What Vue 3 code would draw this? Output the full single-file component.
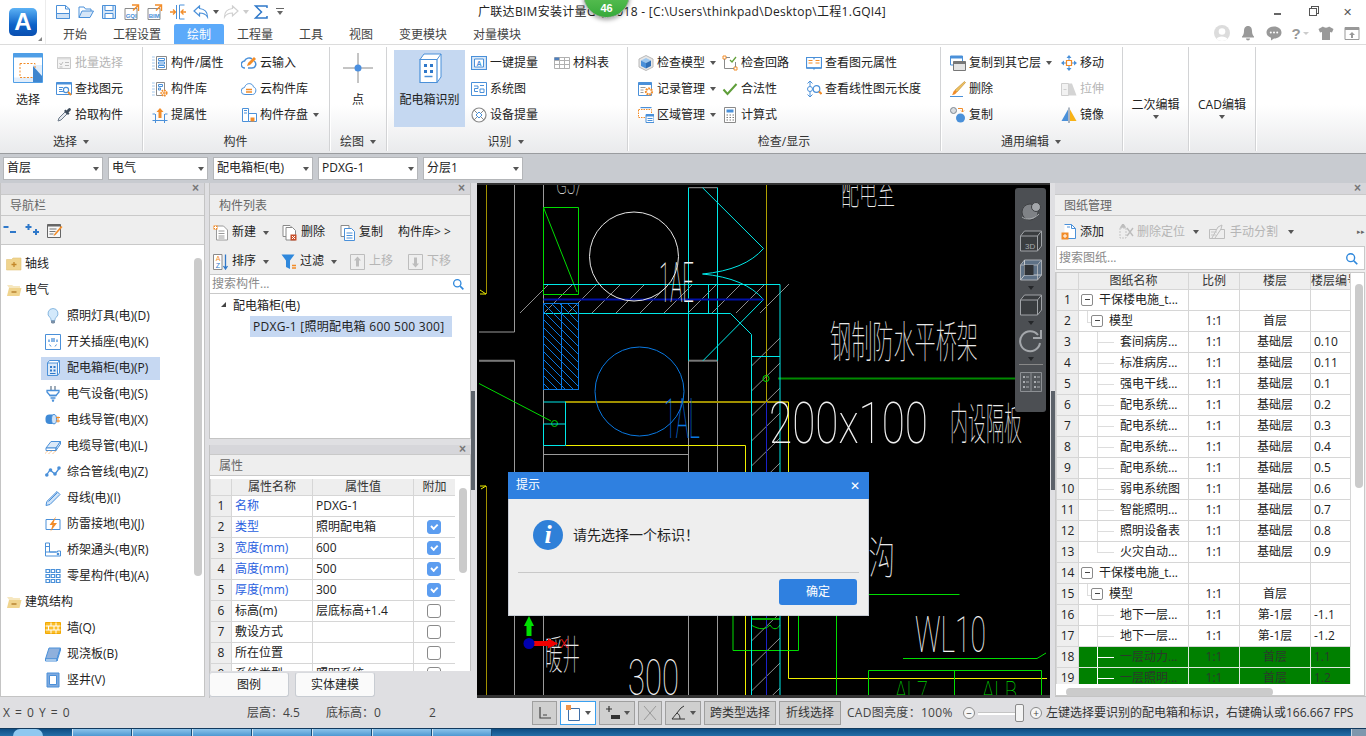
<script setup>
import { h } from "vue";

const B = "#4a90d9";
const O = "#f28c28";
const G = "#8a8a8a";
const icons = {
  qaNew: `<path d="M1.5 1.5h9l4 3.5v9.5h-13z" fill="#fff" stroke="${B}"/><path d="M10.5 1.5V5h4" fill="none" stroke="${B}"/><path d="M1.5 9.5h13v5h-13z" fill="#cfe2f6" stroke="${B}"/>`,
  qaOpen: `<path d="M1 13.5V3h5l1.5 2H13v2" fill="#fff" stroke="${B}"/><path d="M1 13.5L4 7h11.5l-3.5 6.5z" fill="#d6e6f7" stroke="${B}"/>`,
  qaSave: `<path d="M1.5 1.5h13v13h-13z" fill="#d6e6f7" stroke="${B}"/><path d="M4 1.5h8v5H4z" fill="#fff" stroke="${B}"/><path d="M4 9.5h8v5H4z" fill="#fff" stroke="${B}"/>`,
  qaGqi: `<path d="M1 4.5h12v11H1z" fill="#fff" stroke="${G}"/><path d="M8 1h6.5v6" fill="none" stroke="${O}" stroke-width="1.4"/><path d="M14 1.5L9 6.5" stroke="${O}" stroke-width="1.4"/><text x="1.7" y="13.5" font-size="6" font-weight="700" font-family="Liberation Sans" fill="${B}">GQI</text>`,
  qaBim: `<path d="M1 4.5h12v11H1z" fill="#fff" stroke="${G}"/><path d="M8 1h6.5v6" fill="none" stroke="${O}" stroke-width="1.4"/><path d="M14 1.5L9 6.5" stroke="${O}" stroke-width="1.4"/><text x="1.7" y="13.5" font-size="6" font-weight="700" font-family="Liberation Sans" fill="${B}">BIM</text>`,
  qaSplit: `<path d="M6.5 1v14M9.5 1v14M9.5 1h5M9.5 15h5" fill="none" stroke="${B}"/><path d="M0 8h5M3 5.5L5.5 8 3 10.5M16 8h-4M13.5 5.5L11 8l2.5 2.5" fill="none" stroke="${O}" stroke-width="1.3"/>`,
  undo: `<path d="M6.5 2L1 7l5.5 5V9c3 0 6 .7 8 4 0-5-3-8-8-8.5z" fill="#fff" stroke="${B}" stroke-width="1.2"/>`,
  redo: `<path d="M9.5 2L15 7l-5.5 5V9c-3 0-6 .7-8 4 0-5 3-8 8-8.5z" fill="#fff" stroke="#d0d0d0" stroke-width="1.2"/>`,
  sigma: `<path d="M14 4V2H2.5l6 6-6 6H14v-2" fill="none" stroke="#2f78c9" stroke-width="1.5"/>`,
  batch: `<path d="M1.5 2.5h13v11h-13z" fill="#f4f4f4" stroke="#c8c8c8"/><path d="M1.5 2.5h13v2h-13z" fill="#dcdcdc"/><path d="M3.5 8l1.5 2 2-3M3.5 12h3M9 7.5h4M9 10.5h4" fill="none" stroke="#bdbdbd"/>`,
  find: `<path d="M.5 1.5h15v12H.5z" fill="#fff" stroke="${B}"/><path d="M.5 1.5h15v2H.5z" fill="${B}"/><path d="M3 6.5h4M3 8.5h3M3 10.5h4" stroke="${B}"/><circle cx="10" cy="9" r="2.6" fill="#fff" stroke="${B}" stroke-width="1.2"/><path d="M12 11l3 3" stroke="${O}" stroke-width="2"/>`,
  pick: `<path d="M2 14l1-3 6-6 2 2-6 6z" fill="#e4e8ee" stroke="#6e7b8a"/><path d="M8 4l4 4 1.5-1.5-1-1 2-2a1.4 1.4 0 0 0-2-2l-2 2-1-1z" fill="#3e4c5c"/>`,
  attr: `<path d="M.5 2h2M.5 5h2M.5 8h2M.5 11h2M.5 14h2" stroke="${B}" stroke-dasharray="1 .6"/><path d="M4.5 1.5h10v13h-10z" fill="#fff" stroke="${G}"/><path d="M6.5 3.5h6v2h-6zM6.5 7h6v2h-6zM6.5 10.5h6v2h-6z" fill="#fff" stroke="${B}"/>`,
  lib: `<path d="M.5 2h2M.5 5h2M.5 8h2M.5 11h2M.5 14h2" stroke="${B}" stroke-dasharray="1 .6"/><path d="M4.5 1.5h8v13h-8z" fill="#fff" stroke="${G}"/><path d="M6.5 3.5h4v2h-4zM6.5 7h2v2h-2z" fill="#fff" stroke="${B}"/><circle cx="12" cy="12" r="2.6" fill="#fff" stroke="${O}" stroke-width="2" stroke-dasharray="1.6 .8"/><circle cx="12" cy="12" r="1" fill="${O}"/>`,
  extract: `<path d="M8 1L4.5 5h2v6h3V5h2z" fill="${O}"/><path d="M.5 7H3M.5 13.5h15M13 7h2.5M3.5 7v9M12.5 7v9" fill="none" stroke="${B}"/>`,
  cloudIn: `<path d="M4 13a3.5 3.5 0 0 1-.5-7C4.5 3 9 2 11 4" fill="none" stroke="${B}" stroke-width="1.5"/><path d="M13 6c3 2 2 7-2 7H7" fill="none" stroke="${B}" stroke-width="1.5"/><path d="M6 11l1-3 6-6 2 2-6 6z" fill="${O}"/>`,
  cloudLib: `<path d="M4 13.5a3.5 3.5 0 0 1-.5-7C4.5 3 8 1.5 11 3.5c1 .7 1.2 1.6 1.5 2.5 3.5.5 3 7.500-1 7.500z" fill="#fff" stroke="${B}"/><path d="M5 8.500h6M5 11h6" stroke="${O}" stroke-width="1.5"/>`,
  saveComp: `<path d="M1.5 1.5h6v13h-6z" fill="#fff" stroke="${B}"/><path d="M3 3.500h3M3 6h3" stroke="${B}"/><path d="M7.500 6.500h8v8h-8z" fill="#fff" stroke="${B}"/><path d="M9.500 10.500h4v4h-4z" fill="${O}"/>`,
  selectBig: `<path d="M.5 .5h29v29H.5z" fill="#fff" stroke="#4f9ee6"/><path d="M.5 .5h29v4H.5z" fill="#4f9ee6"/><path d="M1 24.500h19V12h9v17H1z" fill="#e2eefb"/><path d="M7 10.500h15v14H7z" fill="none" stroke="${O}" stroke-dasharray="2 1.5"/><path d="M20 13l9 10v6h-9z" fill="#3f86cf"/>`,
  point: `<path d="M15 0v12M15 18v12M0 15h12M18 15h12" stroke="${G}"/><circle cx="15" cy="15" r="3.5" fill="#4a8fe0"/>`,
  boxBig: `<path d="M5 6.500L9 1h17v23l-4 5.500M22 6.500L26 1" fill="#fff" stroke="${B}"/><path d="M5 6.500h17v23H5z" fill="#fff" stroke="${B}" stroke-width="1.2"/><path d="M9 11h3v3H9zM15 11h3v3h-3zM9 17h3v3H9zM15 17h3v3h-3z" fill="#2f78c9"/><path d="M9.500 23.500h8" stroke="${B}" stroke-width="1.5"/>`,
  onekey: `<path d="M.5 1.500h15v13H.5z" fill="#dbe9f8" stroke="${B}" stroke-width="1.2"/><path d="M3.500 4h9v8h-9z" fill="#fff" stroke="${B}"/><text x="5.500" y="10.500" font-size="7" font-weight="700" font-family="Liberation Sans" fill="${B}">A</text>`,
  sys: `<path d="M.5 1.500h15v13H.5z" fill="#fff" stroke="${B}"/><path d="M3 5h4v2.500H3.500v3H7M9 4.500h4M9 8h4v3.500H9z" fill="none" stroke="${B}"/>`,
  device: `<circle cx="8" cy="8" r="7" fill="#fff" stroke="${G}" stroke-width="1.2"/><path d="M3 3l10 10M13 3L3 13" stroke="${G}"/><path d="M8 5l3 3-3 3-3-3z" fill="#fff" stroke="${B}"/>`,
  material: `<path d="M.5 2.500h15v11H.5z" fill="#fff" stroke="#b0b0b0"/><path d="M.5 2.500h5v3h-5z" fill="#4e7fbd"/><path d="M.5 5.500h15M.5 9.500h15M5.500 2.500v11M10.500 2.500v11" stroke="#b0b0b0"/>`,
  cube: `<path d="M8 .5l7 3.500v8l-7 3.500-7-3.500V4z" fill="#e6e6e6" stroke="#b8b8b8"/><path d="M8 3l5 2.500L8 8 3 5.500z" fill="#9cc7ef"/><path d="M3 5.500v5.500L8 13.500V8z" fill="#4a90d9"/><path d="M13 5.500v5.500L8 13.500V8z" fill="#2f6fb6"/>`,
  record: `<path d="M.5 1.500h13v13H.5z" fill="#fff" stroke="${B}"/><path d="M.5 1.500h13v2.500H.5z" fill="${B}"/><path d="M2.500 6.500h5M2.500 9h3M2.500 11.500h3" stroke="#9a9a9a"/><circle cx="11" cy="10.500" r="3" fill="#fff" stroke="${O}" stroke-width="2.2" stroke-dasharray="1.8 .8"/>`,
  region: `<path d="M.5 2.500h13v8H.5z" fill="#fff" stroke="${O}" stroke-dasharray="1.5 1"/><path d="M8 7.500h8v8H8z" fill="#fff" stroke="${B}"/><path d="M8 7.500h8v2H8z" fill="${B}"/><path d="M9.500 11.500h5M9.500 13.500h5" stroke="${B}"/><path d="M2.500 .5h11" stroke="${B}" stroke-width="1.4"/>`,
  loop: `<path d="M1 1h3v3H1zM12 12h3v3h-3z" fill="#fff" stroke="${O}"/><path d="M4 2.500h4M2.500 4v9.500H12M13.500 7v5" fill="none" stroke="${G}"/><path d="M8 5l2 2 4-5" fill="none" stroke="#62a03a" stroke-width="1.3"/>`,
  legal: `<path d="M1.500 8.500l4 4.500 9-10" fill="none" stroke="#5f9e3a" stroke-width="2"/>`,
  calc: `<path d="M2.500 .5h11v15h-11z" fill="#fff" stroke="#8a8a8a"/><path d="M4.500 2.500h7v3h-7z" fill="${B}"/><path d="M4.500 8h1.500M7.500 8H9M10.500 8H12M4.500 10.500h1.500M7.500 10.500H9M10.500 10.500H12M4.500 13h1.500M7.500 13H9M10.500 13H12" stroke="#777"/>`,
  book: `<path d="M.5 2.500h7l.5 1 .5-1h7V13H8.500l-.5 1-.5-1H.5z" fill="#fff" stroke="${B}" stroke-width="1.2"/><path d="M2.500 5.500h4M2.500 8h4M9.500 5.500h4M9.500 8h4" stroke="${O}"/><path d="M.5 13h15" stroke="${B}" stroke-width="1.5"/>`,
  len: `<path d="M4 0v16M1.500 2.500L4 0l2.500 2.500M1.500 13.500L4 16l2.500-2.500" fill="none" stroke="${B}"/><circle cx="4" cy="8" r="2.5" fill="#fff" stroke="${B}"/><circle cx="10.500" cy="8" r="3.3" fill="#fff" stroke="${B}" stroke-width="1.2"/><path d="M13 10.500l2.500 2.500" stroke="${O}" stroke-width="2"/>`,
  copyLayer: `<path d="M.5 1h12v9H.5z" fill="#fff" stroke="${B}"/><path d="M.5 1h12v2.500H.5z" fill="${B}"/><path d="M3.500 6.500h12v9h-12z" fill="#e4e4e4" stroke="#777"/><path d="M3.500 6.500h12v2.500h-12z" fill="#777"/>`,
  move: `<path d="M8 0L5.500 3h5zM8 16l-2.500-3h5zM0 8l3-2.500v5zM16 8l-3-2.500v5z" fill="${B}"/><path d="M3 8h2M11 8h2M8 3v2M8 11v2" stroke="${B}"/><path d="M5.500 5.500h5v5h-5z" fill="#fff" stroke="${O}" stroke-width="1.2"/>`,
  brush: `<path d="M14.500 .5l1 1L7 11l-2-2z" fill="#f0c060" stroke="#b98a30" stroke-width=".6"/><path d="M5 9l2 2c-1 2-3 3-5 3 1-1 1-4 3-5z" fill="${O}"/><path d="M0 15.500h13" stroke="${B}"/>`,
  stretch: `<path d="M.5 2.500h7v12h-7z" fill="#f2f2f2" stroke="#cfcfcf"/><path d="M7.500 2.500h3.500l4.500 12h-8z" fill="#d4d4d4"/><path d="M2.500 8.500h3" stroke="#cfcfcf"/>`,
  copy: `<circle cx="3.500" cy="3.500" r="3" fill="#d9dce0" stroke="#7d8790"/><circle cx="10.500" cy="11" r="4.500" fill="#4a90d9"/><path d="M8 1.500h4.500V5M11 3.500l1.500 1.500L14 3.500" fill="none" stroke="${O}"/>`,
  mirror: `<path d="M7 2.500v11.500H.5z" fill="#4a90d9"/><path d="M9 2.500v11.500h6.500z" fill="#f7b217"/><path d="M8 .5v15.500" stroke="#5a6e85"/>`,
  folderPlus: `<path d="M.5 3.500h5l1.500-1.500h8V14H.5z" fill="#f0d48e" stroke="#e3c478" stroke-width=".6"/><path d="M8 6v5M5.500 8.500h5" stroke="#c2872a" stroke-width="1.3"/>`,
  folderMinus: `<path d="M1 3h5l1.500 1H14v2.500H3.500z" fill="#f6e7bf"/><path d="M3 6h12.500L13.500 14H1z" fill="#f0d48e"/><path d="M5.500 10h5" stroke="#b88432" stroke-width="1.5"/>`,
  bulb: `<path d="M8 .5a5 5 0 0 0-3 9c1 1 1 2 1 3h4c0-1 0-2 1-3a5 5 0 0 0-3-9z" fill="#d3e9fb" stroke="#89b8e0"/><path d="M6 12.500h4v2l-1 1H7l-1-1z" fill="#7a8fa6"/>`,
  socket: `<path d="M.5 .5h15v15H.5z" fill="#fff" stroke="${B}"/><path d="M4 5.500v2.500M7 4v4M9 4v4M12 5.500v2.500" stroke="${B}" stroke-width="1.3"/><path d="M4.500 10.500l1.500 2M11.500 10.500L10 12.500" stroke="${B}"/>`,
  cabinet: `<path d="M2.500 3L4.500 .5h10v12.500l-2 2.500M12.500 3l2-2.500" fill="#fff" stroke="${B}"/><path d="M2.500 3h10v12.500h-10z" fill="#dbe9f8" stroke="${B}"/><path d="M5 6h2v2H5zM8.500 6h2v2h-2zM5 9.500h2v2H5zM8.500 9.500h2v2h-2z" fill="#2f78c9"/><path d="M5 13.500h5.500" stroke="#2f78c9"/>`,
  plug: `<path d="M6 0v4M10 0v4" stroke="#6b7e92" stroke-width="1.3"/><path d="M2 4.500h12v1.500l-3 3.500H5L2 6z" fill="#fff" stroke="${B}" stroke-width="1.3"/><path d="M4.500 9.500h7M5.500 12h5" stroke="${B}" stroke-width="1.6"/><path d="M6.500 13.500h3l-1 2.500h-1z" fill="${B}"/>`,
  wire: `<rect x=".5" y="2.500" width="11" height="9.500" rx="4" fill="#3f8ad6"/><ellipse cx="9" cy="7.200" rx="2.500" ry="4.700" fill="#cfe3f8" stroke="${B}"/><path d="M11 5.500h4M11 9h4M13 4.500v6" stroke="${O}"/>`,
  cable: `<path d="M1 10L6 3.500h9.500L11 10z" fill="#dbe9f8" stroke="${B}"/><path d="M1 10h10v2.500H1zM11 10l4.500-6.500V6L11 12.500z" fill="#fff" stroke="${B}"/><path d="M0 15.500L3 12.500M4 15.500L7 12.500M8 15.500L11 12.500" stroke="${O}" stroke-dasharray="1 .8"/>`,
  net: `<path d="M1.500 11L5 6l5 4 4.500-6" fill="none" stroke="${B}" stroke-width="1.3"/><circle cx="1.800" cy="11" r="1.8" fill="${B}"/><circle cx="5.500" cy="6" r="1.8" fill="${B}"/><circle cx="10" cy="10" r="1.8" fill="${B}"/><circle cx="14" cy="4" r="1.8" fill="${B}"/>`,
  bus: `<path d="M1 15.500l.8-4L12 1.500l3 3L5 14.500z" fill="#cfe3f8" stroke="${B}"/><path d="M3.500 11.500l9-9" stroke="${B}"/>`,
  lightning: `<path d="M1 3.500h14v10H1z" fill="#fff" stroke="${B}"/><path d="M11 .5L4.500 9h3L5.500 15.500 12 7H8.500z" fill="${O}"/>`,
  bridge: `<path d="M.5 1h4v9h8v-1h3v5h-15z" fill="#fff" stroke="${B}"/><path d="M.5 10h11M1 4.500h3" stroke="${B}"/><circle cx="13" cy="12" r="1.3" fill="${B}"/>`,
  grid: `<path d="M1 1.500h3.500v3H1zM6.200 1.500h3.500v3H6.200zM11.500 1.500H15v3h-3.500zM1 6.500h3.500v3H1zM6.200 6.500h3.500v3H6.200zM11.500 6.500H15v3h-3.500zM1 11.500h3.500v3H1zM6.200 11.500h3.500v3H6.200zM11.500 11.500H15v3h-3.500z" fill="none" stroke="${B}" stroke-width="1.2"/>`,
  wall: `<path d="M.5 2.500h15v11H.5z" fill="#fbbd28" stroke="#f2a900"/><path d="M.5 6h15M.5 10h15M6 2.500V6M11 2.500V6M3.500 6v4M9 6v4M13 6v4M6 10v3.500M11 10v3.500" stroke="#fff"/>`,
  slab: `<path d="M.5 13l3.500-11h11.500L12 13z" fill="#8fb0dc" stroke="${B}"/><path d="M.5 13H12v2H.5zM12 13l3.500-11v2L12 15z" fill="#fff" stroke="${B}"/>`,
  shaft: `<path d="M2 1h12v14H2z" fill="#7fa9de" stroke="${B}"/><path d="M4.500 3.500h7v9h-7z" fill="#fff" stroke="${B}"/>`,
  collapse: `<path d="M.5 4h5M7 9h6" stroke="#2f78c9" stroke-width="2"/>`,
  expand: `<path d="M.5 4h6M3.500 1v6M8 9h6M11 6v6" stroke="#2f78c9" stroke-width="2"/>`,
  edit: `<path d="M.5 1.500h13v13H.5z" fill="#f8f8f8" stroke="#666"/><path d="M.5 1.500h13v2H.5z" fill="#666"/><path d="M2.500 6h7M2.500 8.500h6M2.500 11h4" stroke="#777"/><path d="M15.500 4l-7 8-2 1 .8-2 6.700-8z" fill="${O}"/>`,
  addDoc: `<path d="M3.500 1h7l4 4v10h-11z" fill="#fff" stroke="#9a9a9a"/><path d="M5.500 6h6M5.500 8.500h6M5.500 11h6M5.500 13h6" stroke="#9a9a9a"/><path d="M.5 .5h4v4h-4z" fill="${O}"/><path d="M2.500 1v3M1 2.500h3" stroke="#fff"/>`,
  delDoc: `<path d="M1 .5h7l1 1v10H1z" fill="#fff" stroke="#8a8a8a"/><path d="M4 2.500h6.500l3 3v9.500H4z" fill="#fff" stroke="#8a8a8a"/><path d="M8.500 9.500h6v6h-6z" fill="#c8502c"/><path d="M10 11l3 3M13 11l-3 3" stroke="#fff"/>`,
  copyDoc: `<path d="M1 .5h8v11H1z" fill="#fff" stroke="#8a8a8a"/><path d="M4.500 3.500h7l3 3v9h-10z" fill="#fff" stroke="${B}"/><path d="M6.500 8h6M6.500 10.500h6M6.500 13h6" stroke="${B}"/>`,
  sort: `<path d="M.5 .5h8.500v15H.5z" fill="#fff" stroke="#8a8a8a"/><text x="2.700" y="7" font-size="7" font-family="Liberation Sans" fill="${O}">A</text><text x="2.700" y="14" font-size="7" font-family="Liberation Sans" fill="#2f78c9">Z</text><path d="M12.500 .5v14M10.500 12l2 3 2-3" fill="none" stroke="#2f78c9" stroke-width="1.3"/>`,
  filter: `<path d="M.5 .5h13L9 6.500V15l-4-2V6.500z" fill="#2f88dc"/><path d="M11 11.500h4M11 14h4" stroke="${O}" stroke-width="1.3"/>`,
  up: `<path d="M.5 .5h14v15H.5z" fill="#eee" stroke="#bdbdbd"/><path d="M7.500 2.500L4 6.500h2v6h3v-6h2z" fill="#bdbdbd"/>`,
  down: `<path d="M.5 .5h14v15H.5z" fill="#eee" stroke="#bdbdbd"/><path d="M7.500 13.500L4 9.500h2v-6h3v6h2z" fill="#bdbdbd"/>`,
  search: `<circle cx="6.500" cy="6.500" r="4.500" fill="none" stroke="#2f88dc" stroke-width="1.6"/><path d="M10 10l4 4" stroke="#2f88dc" stroke-width="2"/>`,
  add: `<path d="M3.500 .5h7l4 4v10h-11" fill="#fff" stroke="${B}"/><path d="M10.500 .5v4h4M6 3h3" fill="none" stroke="${B}"/><path d="M.5 8.500h7v7h-7z" fill="${O}"/><path d="M4 10v4M2 12h4" stroke="#fff"/>`,
  delLoc: `<path d="M2 4h6v10H2z" fill="none" stroke="#c4c4c4" stroke-dasharray="2 1"/><path d="M5 0L3 3h4zM9 4l6 8M15 4l-6 8" stroke="#bdbdbd" stroke-width="1.4" fill="#bdbdbd"/>`,
  handSplit: `<path d="M.5 5.500h15v9H.5z" fill="none" stroke="#bdbdbd"/><path d="M3 14l6-11 4-2-1 4-6 9" fill="#efefef" stroke="#bdbdbd"/><path d="M2 8h6M2 11h5" stroke="#c8c8c8"/>`,
  avatar: `<circle cx="8" cy="8" r="8" fill="#dcdcdc"/><circle cx="8" cy="6.500" r="3.3" fill="#fff"/><path d="M2.500 14c1-3.500 9.500-3.500 11 0-3 2.500-8 2.500-11 0z" fill="#fff"/>`,
  bell: `<path d="M8 1C5 1 4 3.500 4 6c0 3-1 4.500-2 5.500v1h12v-1c-1-1-2-2.500-2-5.500 0-2.500-1-5-4-5z" fill="#999"/><path d="M6 13.500h4a2 2 0 0 1-4 0z" fill="#999"/>`,
  chat: `<path d="M8 1.500c4.200 0 7.500 2.500 7.500 6S12.200 13.500 8 13.500l-3 2v-2.800C2.300 11.800.5 9.900.5 7.500c0-3.500 3.300-6 7.500-6z" fill="#999"/><circle cx="4.800" cy="7.500" r="1" fill="#fff"/><circle cx="8" cy="7.500" r="1" fill="#fff"/><circle cx="11.200" cy="7.500" r="1" fill="#fff"/>`,
  shirt: `<path d="M5 1.500L.5 4l1.500 3.500L4 7v8h8V7l2 .5L15.500 4 11 1.500C10.500 3 5.500 3 5 1.500z" fill="#999"/>`,
  upload: `<path d="M1 2.500h14v12H1z" fill="#fff" stroke="#999"/><path d="M1 2.500h14v2.500H1z" fill="#999"/><path d="M8 7l-3 3h2v3h2v-3h2z" fill="#999"/>`,
  sphere: `<circle cx="11" cy="12" r="8" fill="#7f8286" stroke="#3f4144"/><circle cx="17" cy="7" r="4.500" fill="#a4a7ab" stroke="#3f4144"/><path d="M3 17c4 3 11 3 17-3" fill="none" stroke="#a8abae"/>`,
  box3d: `<path d="M1.500 7h17v15h-17zM1.500 7l4-5h17v15l-4 5M18.500 7l4-5" fill="#3a3d40" stroke="#a0a3a7"/><text x="6" y="20" font-size="8" font-family="Liberation Sans" fill="#a8abaf">3D</text>`,
  boxWire: `<path d="M1.500 7h17v15h-17zM1.500 7l4-5h17v15l-4 5M18.500 7l4-5" fill="#5e7186" stroke="#a8adb3"/><path d="M5.500 2v15h17M5.500 17l-4 5" fill="none" stroke="#c4c8cc"/><path d="M5.500 7h9v10h-9z" fill="#2f3236"/>`,
  boxSolid: `<path d="M1.500 7h17v15h-17zM1.500 7l4-5h17v15l-4 5M18.500 7l4-5" fill="#3a3d40" stroke="#a0a3a7"/>`,
  refresh: `<path d="M19 6a10 10 0 1 0 2 8" fill="none" stroke="#a4a7ab" stroke-width="2"/><path d="M22 1v8h-8" fill="none" stroke="#a4a7ab" stroke-width="2"/>`,
  list: `<path d="M1.500 1.500h21v19h-21z" fill="#53575b" stroke="#8d9094"/><path d="M12 1.500v19" stroke="#8d9094"/><path d="M4 5h2v2H4zM4 10h2v2H4zM4 15h2v2H4zM15 5h2v2h-2zM15 10h2v2h-2zM15 15h2v2h-2z" fill="#a9acb0"/><path d="M7 6h3M7 11h3M7 16h3M18 6h3M18 11h3M18 16h3" stroke="#a9acb0"/>`,
  corner: `<path d="M3 2v11h11" fill="none" stroke="#444" stroke-width="1.2"/><path d="M6 10h4" stroke="#444"/>`,
  rectSel: `<path d="M2.500 3.500h11v12h-11z" fill="#fff" stroke="#3f6fa8"/><path d="M0 0h5v5H0z" fill="#f0944a"/>`,
  plusBox: `<path d="M4 1v6M1 4h6" stroke="#333" stroke-width="1.2"/><path d="M6 10h9v4H6z" fill="#333"/>`,
  cross: `<path d="M2 1l12 14M14 1L2 15" stroke="#999"/>`,
  angle: `<path d="M1 14h13M1 14L10 3M6 8c2 1 3 3 3 6" fill="none" stroke="#333"/><path d="M10 3l3-2" stroke="#333"/>`,
};

const Ico = (props) => {
  const size = props.s || 16;
  const box = props.vb || 16;
  return h("svg", {
    width: size,
    height: size,
    viewBox: `0 0 ${box} ${box}`,
    innerHTML: icons[props.n],
    style: "flex:none;display:block",
  });
};
Ico.props = ["n", "s", "vb"];

const tabs = ["开始", "工程设置", "绘制", "工程量", "工具", "视图", "变更模块", "对量模块"];

const groups = [
  {
    cls: "g1", label: "选择", caret: true,
    cols: [
      { big: true, w: 56, icon: "selectBig", text: "选择" },
      { rows: [
        { icon: "batch", text: "批量选择", off: true },
        { icon: "find", text: "查找图元" },
        { icon: "pick", text: "拾取构件" },
      ] },
    ],
  },
  {
    cls: "g2", label: "构件",
    cols: [
      { w: 89, rows: [
        { icon: "attr", text: "构件/属性" },
        { icon: "lib", text: "构件库" },
        { icon: "extract", text: "提属性" },
      ] },
      { rows: [
        { icon: "cloudIn", text: "云输入" },
        { icon: "cloudLib", text: "云构件库" },
        { icon: "saveComp", text: "构件存盘", caret: true },
      ] },
    ],
  },
  { cls: "g3", label: "绘图", caret: true, cols: [{ big: true, w: 56, icon: "point", text: "点" }] },
  {
    cls: "g4", label: "识别", caret: true,
    cols: [
      { big: true, w: 71, icon: "boxBig", text: "配电箱识别", on: true },
      { w: 83, gap: true, rows: [
        { icon: "onekey", text: "一键提量" },
        { icon: "sys", text: "系统图" },
        { icon: "device", text: "设备提量" },
      ] },
      { rows: [{ icon: "material", text: "材料表" }] },
    ],
  },
  {
    cls: "g5", label: "检查/显示",
    cols: [
      { w: 84, rows: [
        { icon: "cube", text: "检查模型", caret: true },
        { icon: "record", text: "记录管理", caret: true },
        { icon: "region", text: "区域管理", caret: true },
      ] },
      { w: 84, rows: [
        { icon: "loop", text: "检查回路" },
        { icon: "legal", text: "合法性" },
        { icon: "calc", text: "计算式" },
      ] },
      { rows: [
        { icon: "book", text: "查看图元属性" },
        { icon: "len", text: "查看线性图元长度" },
      ] },
    ],
  },
  {
    cls: "g6", label: "通用编辑", caret: true,
    cols: [
      { w: 111, rows: [
        { icon: "copyLayer", text: "复制到其它层", caret: true },
        { icon: "brush", text: "删除" },
        { icon: "copy", text: "复制" },
      ] },
      { rows: [
        { icon: "move", text: "移动" },
        { icon: "stretch", text: "拉伸", off: true },
        { icon: "mirror", text: "镜像" },
      ] },
    ],
  },
];

const floors = ["首层", "电气", "配电箱柜(电)", "PDXG-1", "分层1"];

const navTree = [
  { root: true, icon: "folderPlus", text: "轴线" },
  { root: true, icon: "folderMinus", text: "电气" },
  { icon: "bulb", text: "照明灯具(电)(D)" },
  { icon: "socket", text: "开关插座(电)(K)" },
  { icon: "cabinet", text: "配电箱柜(电)(P)", on: true },
  { icon: "plug", text: "电气设备(电)(S)" },
  { icon: "wire", text: "电线导管(电)(X)" },
  { icon: "cable", text: "电缆导管(电)(L)" },
  { icon: "net", text: "综合管线(电)(Z)" },
  { icon: "bus", text: "母线(电)(I)" },
  { icon: "lightning", text: "防雷接地(电)(J)" },
  { icon: "bridge", text: "桥架通头(电)(R)" },
  { icon: "grid", text: "零星构件(电)(A)" },
  { root: true, icon: "folderMinus", text: "建筑结构" },
  { icon: "wall", text: "墙(Q)" },
  { icon: "slab", text: "现浇板(B)" },
  { icon: "shaft", text: "竖井(V)" },
];

const listTools = [
  [
    { icon: "addDoc", text: "新建", caret: true, w: 69 },
    { icon: "delDoc", text: "删除", w: 58 },
    { icon: "copyDoc", text: "复制", w: 58 },
    { text: "构件库> >" },
  ],
  [
    { icon: "sort", text: "排序", caret: true, w: 68 },
    { icon: "filter", text: "过滤", caret: true, w: 69 },
    { icon: "up", text: "上移", off: true, w: 58 },
    { icon: "down", text: "下移", off: true },
  ],
];

const props_ = [
  ["名称", "PDXG-1", null, true],
  ["类型", "照明配电箱", true, true],
  ["宽度(mm)", "600", true, true],
  ["高度(mm)", "500", true, true],
  ["厚度(mm)", "300", true, true],
  ["标高(m)", "层底标高+1.4", false],
  ["敷设方式", "", false],
  ["所在位置", "", false],
  ["系统类型", "照明系统", false],
];

const drawings = [
  [0, "干保楼电施_t...", "", "", ""],
  [1, "模型", "1:1", "首层", ""],
  [2, "套间病房...", "1:1", "基础层", "0.10"],
  [2, "标准病房...", "1:1", "基础层", "0.11"],
  [2, "强电干线...", "1:1", "基础层", "0.1"],
  [2, "配电系统...", "1:1", "基础层", "0.2"],
  [2, "配电系统...", "1:1", "基础层", "0.3"],
  [2, "配电系统...", "1:1", "基础层", "0.4"],
  [2, "配电系统...", "1:1", "基础层", "0.5"],
  [2, "弱电系统图", "1:1", "基础层", "0.6"],
  [2, "智能照明...", "1:1", "基础层", "0.7"],
  [2, "照明设备表", "1:1", "基础层", "0.8"],
  [3, "火灾自动...", "1:1", "基础层", "0.9"],
  [0, "干保楼电施_t...", "", "", ""],
  [1, "模型", "1:1", "首层", ""],
  [2, "地下一层...", "1:1", "第-1层", "-1.1"],
  [2, "地下一层...", "1:1", "第-1层", "-1.2"],
  [2, "一层动力...", "1:1", "首层", "1.1", true],
  [2, "一层照明...", "1:1", "首层", "1.2", true],
];

// 斜线填充，照着 CAD 图上的间距算的
const bandHatch = [];
for (let x = 520; x < 780; x += 24) bandHatch.push([x, 313, x + 29, 284]);
const colHatch = [];
for (let y = 338; y < 700; y += 25) colHatch.push([751.5, y + 28, 780, y]);

const taskButtons = [0, 1, 2, 3, 4, 5, 6];
</script>

<template>
  <div class="app">
    <!-- 标题栏和页签 -->
    <header class="head">
      <div class="logo-box">
        <div class="logo">A</div>
        <span class="logo-mark"></span>
      </div>
      <div class="head-right">
        <div class="qa-row">
          <Ico class="qa" n="qaNew" />
          <Ico class="qa" n="qaOpen" />
          <Ico class="qa" n="qaSave" />
          <Ico class="qa" n="qaGqi" />
          <Ico class="qa" n="qaBim" />
          <Ico class="qa" n="qaSplit" />
          <Ico class="qa" n="undo" />
          <i class="caret qa-caret"></i>
          <Ico class="qa" n="redo" />
          <i class="caret qa-caret light"></i>
          <Ico class="qa" n="sigma" />
          <span class="qa-more"></span>
          <div class="title">广联达BIM安装计量GQI2018 - [C:\Users\thinkpad\Desktop\工程1.GQI4]</div>
          <div class="win-btns">
            <span class="win-btn"><i class="w-min"></i></span>
            <span class="win-btn"><i class="w-max"></i></span>
            <span class="win-btn w-close">✕</span>
          </div>
        </div>
        <div class="tab-row">
          <span v-for="t in tabs" :key="t" class="tab" :class="{ active: t === '绘制' }">{{ t }}</span>
          <div class="user-icons">
            <span class="u-ic"><Ico n="avatar" /></span>
            <span class="u-ic"><Ico n="bell" /></span>
            <span class="u-ic"><Ico n="chat" /></span>
            <span class="u-ic help">?<i class="caret light small"></i></span>
            <span class="u-ic"><Ico n="shirt" /></span>
            <span class="u-ic"><Ico n="upload" /></span>
          </div>
        </div>
      </div>
      <div class="badge">46</div>
    </header>

    <!-- 功能区 -->
    <section class="ribbon">
      <div v-for="g in groups" :key="g.cls" class="group" :class="g.cls">
        <div class="group-body">
          <template v-for="(c, i) in g.cols" :key="i">
            <div v-if="c.big" class="big" :class="{ on: c.on }" :style="{ width: c.w + 'px' }">
              <Ico :n="c.icon" :s="30" :vb="30" />
              <span class="big-text">{{ c.text }}</span>
            </div>
            <div v-else class="col" :class="{ 'col-gap': c.gap }" :style="c.w ? { width: c.w + 'px' } : null">
              <div v-for="r in c.rows" :key="r.text" class="r-item" :class="{ off: r.off }">
                <Ico :n="r.icon" />
                <span>{{ r.text }}</span>
                <i v-if="r.caret" class="caret"></i>
              </div>
            </div>
          </template>
        </div>
        <div class="group-label">{{ g.label }}<i v-if="g.caret" class="caret big-caret"></i></div>
      </div>
      <div class="group g7">
        <div class="solo">二次编辑<i class="caret"></i></div>
      </div>
      <div class="group g8">
        <div class="solo">CAD编辑<i class="caret"></i></div>
      </div>
    </section>

    <!-- 楼层选择条 -->
    <section class="floorbar">
      <div v-for="f in floors" :key="f" class="combo">
        <span>{{ f }}</span>
        <i class="caret"></i>
      </div>
    </section>

    <main class="main">
      <!-- 导航栏 -->
      <aside class="panel nav">
        <div class="p-strip">×</div>
        <div class="p-title">导航栏</div>
        <div class="nav-tools">
          <Ico n="collapse" />
          <Ico n="expand" />
          <Ico n="edit" />
        </div>
        <div class="nav-body">
          <div class="nav-list">
            <div v-for="n in navTree" :key="n.text" class="nav-row" :class="{ root: n.root }">
              <div class="nav-item" :class="{ on: n.on }">
                <Ico :n="n.icon" />
                <span>{{ n.text }}</span>
              </div>
            </div>
          </div>
          <div class="nav-scroll"></div>
        </div>
      </aside>

      <!-- 构件列表 + 属性 -->
      <div class="mid">
        <div class="panel list-panel">
          <div class="p-strip">×</div>
          <div class="p-title">构件列表</div>
          <div class="list-tools">
            <div v-for="(row, i) in listTools" :key="i" class="lt-row">
              <div v-for="t in row" :key="t.text" class="lt-item" :class="{ off: t.off }" :style="t.w ? { width: t.w + 'px' } : null">
                <Ico v-if="t.icon" :n="t.icon" />
                <span>{{ t.text }}</span>
                <i v-if="t.caret" class="caret"></i>
              </div>
            </div>
          </div>
          <div class="search"><span>搜索构件...</span><Ico n="search" :s="13" /></div>
          <div class="tree">
            <div class="tree-root"><i class="tree-arrow"></i>配电箱柜(电)</div>
            <div class="tree-leaf">PDXG-1 [照明配电箱 600 500 300]</div>
          </div>
        </div>

        <div class="panel prop-panel">
          <div class="p-strip">×</div>
          <div class="p-title">属性</div>
          <div class="prop-body">
            <div class="prop-wrap">
              <table class="prop">
                <colgroup><col class="c-i" /><col class="c-n" /><col class="c-v" /><col class="c-x" /></colgroup>
                <thead>
                  <tr><th></th><th>属性名称</th><th>属性值</th><th>附加</th></tr>
                </thead>
                <tbody>
                  <tr v-for="(p, i) in props_" :key="p[0]">
                    <td class="idx">{{ i + 1 }}</td>
                    <td :class="{ link: p[3] }">{{ p[0] }}</td>
                    <td>{{ p[1] }}</td>
                    <td class="chk-cell">
                      <span v-if="p[2] !== null" class="chk" :class="{ on: p[2] }"></span>
                    </td>
                  </tr>
                </tbody>
              </table>
            </div>
            <div class="prop-track"><div class="prop-thumb"></div></div>
          </div>
          <div class="prop-tabs">
            <span class="pt pt1">图例</span>
            <span class="pt pt2">实体建模</span>
          </div>
        </div>
      </div>

      <div class="split"><i></i></div>

      <!-- CAD 画布 -->
      <div class="canvas">
        <svg class="cad" width="573" height="510" viewBox="477 185 573 510">
          <defs>
            <pattern id="blue-hatch" patternUnits="userSpaceOnUse" width="8" height="8">
              <path d="M-1 -1L9 9M-1 7L1 9M7 -1L9 1" stroke="#0a78e0" stroke-width="1" />
            </pattern>
          </defs>
          <!-- 灰色墙线 -->
          <g fill="none" stroke="#9a9a9a">
            <path d="M479 332H514.500V185M479 360.700H514.500V695" />
            <path d="M543.500 185V695M688.500 360V695M717.500 360V695M688.500 187.700H717.500" />
            <path d="M543.500 454.500H688.500" />
            <path d="M688.500 360.700H717.500" stroke-width="2" stroke="#777" />
            <path d="M479 360.700H514.500" stroke-width="2" stroke="#777" />
          </g>
          <g stroke="#8c8c8c">
            <line v-for="(l, i) in bandHatch" :key="i" :x1="l[0]" :y1="l[1]" :x2="l[2]" :y2="l[3]" />
            <line v-for="(l, i) in colHatch" :key="'c' + i" :x1="l[0]" :y1="l[1]" :x2="l[2]" :y2="l[3]" />
          </g>
          <!-- 橄榄色 / 黄色线 -->
          <g fill="none" stroke="#a09000">
            <path d="M486.500 185V294M486.500 486V695" />
            <path d="M565 402H788.500" stroke-width="2" />
          </g>
          <g fill="none" stroke="#f0f000" stroke-width="1">
            <path d="M480 290L486 294H480M481 489L486 486H480" />
            <path d="M565.500 445.500H745.500V695M788.500 402V678.500H1047" />
          </g>
          <path d="M766.500 185V402" stroke="#b0a000" fill="none" />
          <path d="M766.500 402V695" stroke="#1a22c8" fill="none" />
          <!-- 绿色线 -->
          <g fill="none" stroke="#00dc00">
            <path d="M543.500 207.500H578.500V294.500H543.500V207.500L577 292" />
            <path d="M479 383.500L551 421" />
            <circle cx="554.500" cy="423.500" r="3" />
            <circle cx="766" cy="378.500" r="3" />
            <path d="M733 616V650.500H798.500V616" />
            <path d="M751 625C760 630 765 630 770 625C773 630 777 630 780 625" />
            <path d="M869 594.500H959.500M836.500 616V695" />
            <path d="M903 658.500H1037L1046 653" />
            <path d="M868.500 695V670.500H1041.500V695M954.500 670.500V695" />
          </g>
          <path d="M751 619H780" stroke="#00a800" stroke-width="2" />
          <path d="M778 378.500H1046" stroke="#008a00" stroke-width="2" />
          <!-- 青色线 -->
          <g fill="none" stroke="#00e8e8">
            <path d="M688.500 187.700V360.700M717.500 187.700V360.700" />
            <path d="M543.500 284.500H780V695M543.500 313.500H730.500L751.500 334.500V695M708.500 284.500V313.500M751.500 356.500H780" />
            <path d="M702.500 187.700L763.500 248.500Q745 270 702.500 274Q745 278 763.500 299.500L703 360.700" />
            <path d="M543.500 402H565.500V445.500H543.500V424H565.500" />
          </g>
          <path d="M543.500 299.500H763.500" stroke="#0010a8" stroke-width="2" />
          <!-- 蓝色图块 -->
          <rect x="543.500" y="303.500" width="35" height="86" fill="url(#blue-hatch)" stroke="#0a78e0" />
          <path d="M561.500 303.500V389.500" stroke="#0a78e0" />
          <circle cx="639.500" cy="391.500" r="44.500" fill="none" stroke="#0a78e0" />
          <circle cx="634" cy="256.500" r="44.500" fill="none" stroke="#e6e6e6" />
          <!-- CAD 文字 -->
          <text class="cad-t" x="556" y="194" font-size="24" textLength="26" lengthAdjust="spacingAndGlyphs">GJ/</text>
          <text class="cad-t" x="659" y="302" font-size="56" textLength="35" lengthAdjust="spacingAndGlyphs">1AE</text>
          <text class="cad-t blue" x="664" y="438" font-size="56" textLength="36" lengthAdjust="spacingAndGlyphs">1AL</text>
          <text class="cad-c" x="841" y="204" font-size="38" textLength="54" lengthAdjust="spacingAndGlyphs">配电室</text>
          <text class="cad-c" x="830" y="358" font-size="44" textLength="148" lengthAdjust="spacingAndGlyphs">钢制防水平桥架</text>
          <text class="cad-t" x="769" y="443" font-size="58" textLength="159" lengthAdjust="spacingAndGlyphs">200x100</text>
          <text class="cad-c" x="950" y="440" font-size="44" textLength="72" lengthAdjust="spacingAndGlyphs">内设隔板</text>
          <text class="cad-c" x="842" y="574" font-size="44" textLength="53" lengthAdjust="spacingAndGlyphs">线沟</text>
          <text class="cad-t" x="915" y="652" font-size="50" textLength="71" lengthAdjust="spacingAndGlyphs">WL10</text>
          <text class="cad-c" x="545" y="669" font-size="40" textLength="35" lengthAdjust="spacingAndGlyphs">暖井</text>
          <text class="cad-t" x="628" y="695" font-size="50" textLength="51" lengthAdjust="spacingAndGlyphs">300</text>
          <text class="cad-t green" x="895" y="700" font-size="26" textLength="33" lengthAdjust="spacingAndGlyphs">AL7</text>
          <text class="cad-t green" x="982" y="700" font-size="26" textLength="35" lengthAdjust="spacingAndGlyphs">ALB</text>
          <!-- 坐标轴 -->
          <path d="M529 636V624" stroke="#00e000" stroke-width="5" />
          <path d="M529 616L524 626H534z" fill="#00e000" />
          <path d="M534 643.500H550" stroke="#f00000" stroke-width="5" />
          <path d="M558 643.500L548 638.500V648.500z" fill="#f00000" />
          <circle cx="529" cy="643.500" r="5.500" fill="#0000b0" />
          <text x="560" y="648" font-size="12" font-family="Liberation Sans" fill="#e01010">X</text>
        </svg>

        <div class="view-tools">
          <Ico n="sphere" :s="24" :vb="24" />
          <Ico class="vt-3d" n="box3d" :s="24" :vb="24" />
          <Ico class="vt-wire" n="boxWire" :s="24" :vb="24" />
          <i class="vt-caret"></i>
          <Ico class="vt-solid" n="boxSolid" :s="24" :vb="24" />
          <i class="vt-caret"></i>
          <Ico class="vt-ref" n="refresh" :s="24" :vb="24" />
          <i class="vt-caret"></i>
          <span class="vt-line"></span>
          <Ico class="vt-list" n="list" :s="24" :vb="24" />
        </div>
      </div>

      <div class="split right-split"><i></i></div>

      <!-- 图纸管理 -->
      <aside class="panel draw">
        <div class="p-strip">×</div>
        <div class="p-title">图纸管理</div>
        <div class="draw-tools">
          <div class="lt-item dt1"><Ico n="add" /><span>添加</span></div>
          <div class="lt-item dt2 off"><Ico n="delLoc" /><span>删除定位</span><i class="caret"></i></div>
          <div class="lt-item dt3 off"><Ico n="handSplit" /><span>手动分割</span><i class="caret"></i></div>
          <span class="more">▸▸</span>
        </div>
        <div class="search draw-search"><span>搜索图纸...</span><Ico n="search" :s="14" /></div>
        <div class="draw-body">
          <div class="draw-wrap">
            <table class="dt">
              <colgroup><col class="d-i" /><col class="d-n" /><col class="d-r" /><col class="d-f" /><col class="d-c" /></colgroup>
              <thead>
                <tr><th></th><th>图纸名称</th><th>比例</th><th>楼层</th><th>楼层编号</th></tr>
              </thead>
              <tbody>
                <tr v-for="(d, i) in drawings" :key="i" :class="{ hit: d[5] }">
                  <td class="idx">{{ i + 1 }}</td>
                  <td class="name" :class="'lv' + d[0]">
                    <i v-if="d[0] < 2" class="exp"></i><span>{{ d[1] }}</span>
                  </td>
                  <td class="ctr">{{ d[2] }}</td>
                  <td class="ctr">{{ d[3] }}</td>
                  <td class="code">{{ d[4] }}</td>
                </tr>
              </tbody>
            </table>
            <div class="d-vscroll"></div>
          </div>
          <div class="d-hscroll"><i></i></div>
        </div>
      </aside>

      <!-- 提示框 -->
      <div class="dialog">
        <div class="dlg-title"><span>提示</span><b>✕</b></div>
        <div class="dlg-msg">
          <span class="info"><i>i</i></span>
          <span>请先选择一个标识！</span>
        </div>
        <div class="dlg-foot"><button class="ok">确定</button></div>
      </div>
    </main>

    <!-- 状态栏 -->
    <footer class="status">
      <span class="s-xy">X = 0 Y = 0</span>
      <span class="s-h">层高：4.5</span>
      <span class="s-b">底标高：0</span>
      <span class="s-n">2</span>
      <span class="s-btn sb1"><Ico n="corner" /></span>
      <span class="s-btn sb2"><Ico n="rectSel" /><i class="caret"></i></span>
      <span class="s-btn sb3"><Ico n="plusBox" /><i class="caret"></i></span>
      <span class="s-btn sb4"><Ico n="cross" /></span>
      <span class="s-btn sb5"><Ico n="angle" /><i class="caret"></i></span>
      <span class="s-btn sb6">跨类型选择</span>
      <span class="s-btn sb7">折线选择</span>
      <span class="s-cad">CAD图亮度：100%</span>
      <span class="zoom-btn">−</span>
      <span class="slider"><i></i></span>
      <span class="zoom-btn">+</span>
      <span class="s-msg">左键选择要识别的配电箱和标识，右键确认或166.667 FPS</span>
    </footer>

    <!-- 系统任务栏，只露出一点 -->
    <div class="taskbar">
      <span class="orb"></span>
      <span v-for="t in taskButtons" :key="t" class="task"></span>
      <span class="show-desk"></span>
    </div>
  </div>
</template>

<style>
html,
body {
  margin: 0;
  background: #dfdfe2;
}
</style>

<style scoped>
.app {
  position: relative;
  width: 1366px;
  height: 736px;
  overflow: hidden;
  background: #dfdfe2;
  color: #222;
  font: 12px/1.2 "Open Sans", "Noto Sans CJK SC", sans-serif;
  display: flex;
  flex-direction: column;
}
i {
  font-style: normal;
}
.caret {
  display: inline-block;
  width: 0;
  height: 0;
  border: 3.5px solid transparent;
  border-top: 4px solid #555;
  border-bottom: 0;
  flex: none;
}
.caret.light {
  border-top-color: #ccc;
}
.caret.small {
  border-width: 3px;
  border-bottom: 0;
  margin-left: 2px;
}

/* 顶部 */
.head {
  display: flex;
  height: 44px;
  background: #fff;
  border-bottom: 1px solid #dcdcdc;
  flex: none;
}
.logo-box {
  width: 46px;
  flex: none;
  border-right: 1px solid #ececec;
  box-sizing: border-box;
  padding: 8px 0 0 9px;
  display: flex;
  align-items: flex-start;
}
.logo {
  width: 28px;
  height: 28px;
  border-radius: 5px;
  background: linear-gradient(#5cb2f5, #0d62c8 60%, #0a4fb0);
  color: #fff;
  font: bold 24px/28px "Liberation Sans", sans-serif;
  text-align: center;
}
.logo-mark {
  width: 0;
  height: 0;
  margin: 29px 0 0 1px;
  border-left: 4px solid transparent;
  border-bottom: 4px solid #888;
}
.head-right {
  flex: 1;
  min-width: 0;
  display: flex;
  flex-direction: column;
}
.qa-row {
  height: 22px;
  box-sizing: border-box;
  padding: 2px 0 0 9px;
  display: flex;
  align-items: center;
}
.qa {
  margin-right: 7px;
}
.qa-caret {
  margin: 0 4px 0 -3px;
}
.qa-more {
  width: 8px;
  height: 7px;
  border-top: 1px solid #666;
  position: relative;
}
.qa-more::after {
  content: "";
  position: absolute;
  left: 1px;
  top: 2px;
  border: 3px solid transparent;
  border-top: 4px solid #666;
  border-bottom: 0;
}
.title {
  margin-left: 194px;
  font-size: 12px;
  letter-spacing: 0.3px;
  color: #222;
  white-space: nowrap;
}
.win-btns {
  margin-left: auto;
  display: flex;
  padding-right: 1px;
}
.win-btn {
  width: 35px;
  height: 20px;
  display: flex;
  align-items: center;
  justify-content: center;
  color: #555;
}
.w-min {
  width: 7px;
  height: 2px;
  background: #666;
  margin-top: 4px;
}
.w-max {
  width: 6px;
  height: 6px;
  border: 1px solid #555;
  box-shadow: 2px -2px 0 -1px #fff, 2px -2px 0 0 #555;
}
.w-close {
  font: 11px "DejaVu Sans", sans-serif;
}
.tab-row {
  height: 22px;
  display: flex;
  padding-left: 4px;
  align-items: flex-end;
}
.tab {
  height: 20px;
  line-height: 22px;
  padding: 0 13px;
  color: #444;
  white-space: nowrap;
}
.tab.active {
  background: #5caafa;
  color: #fff;
  border-radius: 2px 2px 0 0;
}
.user-icons {
  margin-left: auto;
  display: flex;
  align-self: center;
  padding-right: 1px;
}
.u-ic {
  width: 26px;
  display: flex;
  justify-content: center;
  align-items: center;
}
.help {
  color: #999;
  font: bold 15px "Liberation Sans", sans-serif;
}
.badge {
  position: absolute;
  left: 583px;
  top: -29px;
  width: 47px;
  height: 47px;
  border-radius: 50%;
  box-sizing: border-box;
  padding-top: 30px;
  background: linear-gradient(#7fd66c, #36a93a);
  border: 1px solid #9aa79a;
  box-shadow: 0 2px 4px rgba(0, 0, 0, 0.35);
  color: #fff;
  font: bold 11px/13px "Liberation Sans", sans-serif;
  text-align: center;
}

/* 功能区 */
.ribbon {
  display: flex;
  height: 108px;
  flex: none;
  background: linear-gradient(#fff 55%, #e9eaec);
  border-bottom: 1px solid #9a9c9f;
}
.group {
  box-sizing: border-box;
  display: flex;
  flex-direction: column;
  border-right: 1px solid #d2d3d5;
  box-shadow: 1px 0 0 #fff;
  margin: 2px 0 2px;
}
.g1 { width: 143px; }
.g2 { width: 187px; padding-left: 9px; }
.g3 { width: 57px; }
.g4 { width: 241px; padding-left: 7px; }
.g5 { width: 313px; padding-left: 10px; }
.g6 { width: 182px; padding-left: 9px; }
.g7 { width: 66px; }
.g8 { width: 67px; }
.group-body {
  height: 80px;
  flex: none;
  margin-top: 3px;
  display: flex;
}
.group-label {
  height: 24px;
  flex: none;
  display: flex;
  align-items: center;
  justify-content: center;
  gap: 6px;
  color: #333;
  margin-left: -10px;
}
.g1 .group-label { margin-left: 0; }
.g3 .group-label { margin-left: 0; }
.big {
  box-sizing: border-box;
  height: 77px;
  padding-top: 3px;
  display: flex;
  flex-direction: column;
  align-items: center;
  flex: none;
}
.big.on {
  background: #c5d8f1;
}
.big-text {
  margin-top: 10px;
  white-space: nowrap;
}
.col {
  flex: none;
  display: flex;
  flex-direction: column;
}
.col-gap {
  margin-left: 6px;
}
.r-item {
  height: 26px;
  display: flex;
  align-items: center;
  gap: 3px;
  white-space: nowrap;
  color: #222;
}
.r-item .caret {
  margin-left: 2px;
}
.off {
  color: #b5b5b5;
}
.solo {
  height: 100%;
  display: flex;
  flex-direction: column;
  align-items: center;
  padding-top: 51px;
  box-sizing: border-box;
  gap: 3px;
}

/* 楼层条 */
.floorbar {
  height: 29px;
  flex: none;
  background: #c8cbd0;
  display: flex;
  align-items: center;
  gap: 5px;
  padding-left: 3px;
}
.combo {
  box-sizing: border-box;
  width: 100px;
  height: 23px;
  background: #fff;
  border: 1px solid #b4b6b9;
  padding: 0 3px;
  display: flex;
  align-items: center;
  justify-content: space-between;
}

/* 主区 */
.main {
  position: relative;
  height: 515px;
  flex: none;
  display: flex;
}
.panel {
  background: #fff;
  display: flex;
  flex-direction: column;
  box-sizing: border-box;
}
.p-strip {
  height: 11px;
  flex: none;
  background: #d6d6da;
  color: #777;
  text-align: right;
  padding-right: 5px;
  font: bold 12px/10px "Liberation Sans", sans-serif;
}
.p-title {
  height: 22px;
  flex: none;
  background: #eeeeee;
  border-top: 1px solid #c9c9c9;
  border-bottom: 1px solid #c9c9c9;
  box-sizing: border-box;
  line-height: 21px;
  padding-left: 9px;
  color: #666;
}
.nav {
  width: 205px;
  height: 514px;
  border-right: 1px solid #c4c4c4;
  border-left: 1px solid #c4c4c4;
  border-bottom: 1px solid #c4c4c4;
  flex: none;
}
.nav-tools {
  height: 29px;
  flex: none;
  box-sizing: border-box;
  background: #eee;
  border-bottom: 1px solid #c9c9c9;
  display: flex;
  align-items: center;
  padding: 2px 0 0 2px;
  gap: 6px;
}
.nav-body {
  flex: 1;
  display: flex;
}
.nav-list {
  flex: 1;
  padding-top: 6px;
}
.nav-row {
  height: 26px;
  display: flex;
  align-items: center;
  padding-left: 40px;
}
.nav-row.root {
  padding-left: 5px;
}
.nav-item {
  height: 23px;
  width: 119px;
  box-sizing: border-box;
  padding-left: 4px;
  display: flex;
  align-items: center;
  gap: 6px;
  white-space: nowrap;
}
.root .nav-item {
  padding-left: 0;
  gap: 3px;
}
.nav-item.on {
  background: #c6d8f2;
}
.nav-scroll {
  width: 8px;
  height: 318px;
  margin: 13px 2px 0 0;
  background: #cbcbcb;
  border-radius: 4px;
}

.mid {
  width: 262px;
  margin-left: 4px;
  flex: none;
  display: flex;
  flex-direction: column;
}
.list-panel {
  height: 256px;
  flex: none;
  border: 1px solid #c4c4c4;
  border-top: 0;
}
.list-tools {
  height: 59px;
  flex: none;
  background: #eee;
  border-bottom: 1px solid #c9c9c9;
  padding: 2px 0 0 3px;
  box-sizing: border-box;
}
.lt-row {
  height: 29px;
  display: flex;
  align-items: center;
}
.lt-item {
  display: flex;
  align-items: center;
  gap: 3px;
  flex: none;
  white-space: nowrap;
  box-sizing: border-box;
}
.lt-item .caret {
  margin-left: 4px;
}
.search {
  height: 19px;
  flex: none;
  box-sizing: border-box;
  border-bottom: 1px solid #c9c9c9;
  display: flex;
  align-items: center;
  justify-content: space-between;
  padding: 1px 5px 0 2px;
  color: #8a8a8a;
}
.tree {
  padding-top: 1px;
}
.tree-root {
  height: 21px;
  line-height: 21px;
  padding-left: 23px;
  position: relative;
}
.tree-arrow {
  position: absolute;
  left: 11px;
  top: 7px;
  border-left: 5px solid transparent;
  border-bottom: 5px solid #444;
}
.tree-leaf {
  margin-left: 40px;
  width: 202px;
  height: 21px;
  line-height: 21px;
  padding-left: 3px;
  box-sizing: border-box;
  white-space: nowrap;
  letter-spacing: 0.27px;
  background: #c6d8f2;
}
.prop-panel {
  margin-top: 6px;
  height: 253px;
  flex: none;
  background: #dfdfe2;
  border-left: 1px solid #c4c4c4;
}
.prop-panel .p-strip {
  height: 9px;
  line-height: 9px;
}
.prop-panel .p-title {
  border-right: 1px solid #c4c4c4;
}
.prop-body {
  height: 195px;
  flex: none;
  display: flex;
  background: #fff;
  padding-top: 3px;
  box-sizing: border-box;
  border-right: 1px solid #c4c4c4;
}
.prop-wrap {
  width: 245px;
  height: 192px;
  overflow: hidden;
  flex: none;
}
table {
  border-collapse: collapse;
  table-layout: fixed;
}
.prop {
  width: 245px;
}
.c-i { width: 21px; }
.c-n { width: 81px; }
.c-v { width: 101px; }
.c-x { width: 42px; }
th {
  height: 16px;
  background: #eeeeee;
  font-weight: 400;
  color: #333;
  border: 1px solid #d6d6d6;
  border-top: 0;
  padding: 0;
  white-space: nowrap;
  overflow: hidden;
}
.prop td {
  height: 20px;
  padding: 0 0 0 3px;
  border: 1px solid #d6d6d6;
  white-space: nowrap;
  overflow: hidden;
}
td.idx {
  background: #eeeeee;
  text-align: center;
  padding: 0;
}
.prop td.idx {
  padding: 0;
}
.link {
  color: #2a5fe0;
}
.prop td.chk-cell {
  padding: 0 2px 0 0;
  text-align: center;
}
.chk {
  display: inline-block;
  vertical-align: middle;
  box-sizing: border-box;
  width: 14px;
  height: 14px;
  border: 1px solid #8a8a8a;
  border-radius: 3px;
  background: #fff;
  position: relative;
}
.chk.on {
  background: #5c9df0;
  border-color: #5c9df0;
}
.chk.on::after {
  content: "";
  position: absolute;
  left: 3px;
  top: 1.5px;
  width: 5px;
  height: 3px;
  border-left: 2px solid #fff;
  border-bottom: 2px solid #fff;
  transform: rotate(-45deg) scale(0.95);
  transform-origin: 4px 3px;
}
.prop-track {
  flex: 1;
  padding: 9px 0 0 4px;
}
.prop-thumb {
  width: 8px;
  height: 85px;
  background: #cbcbcb;
  border-radius: 4px;
}
.prop-tabs {
  height: 26px;
  display: flex;
  gap: 6px;
  padding-top: 1px;
  margin-left: -1px;
}
.pt {
  box-sizing: border-box;
  height: 25px;
  line-height: 23px;
  text-align: center;
  background: #fafafa;
  border: 1px solid #c8ccd2;
  border-top-color: #d8dade;
  border-radius: 3px;
}
.pt1 { width: 80px; }
.pt2 { width: 80px; }

.split {
  width: 6px;
  flex: none;
  position: relative;
}
.split i {
  position: absolute;
  left: 0;
  top: 208px;
  width: 4px;
  height: 99px;
  background: #5c626a;
}
.right-split {
  width: 5px;
}
.right-split i {
  left: 1px;
}
.canvas {
  position: relative;
  width: 573px;
  height: 515px;
  flex: none;
  box-sizing: border-box;
  background: #333;
  padding-top: 2px;
}
.cad {
  display: block;
  background: #000;
}
.cad-t {
  font-family: Roboto, "Liberation Sans", sans-serif;
  font-weight: 100;
  fill: #f0f0f0;
}
.cad-t.blue {
  fill: #0a78e0;
}
.cad-t.green {
  fill: #00dc00;
}
.cad-c {
  font-family: "Noto Sans CJK SC", sans-serif;
  font-weight: 100;
  fill: #e8e8e8;
}
.view-tools {
  position: absolute;
  left: 538px;
  top: 5px;
  width: 31px;
  height: 224px;
  box-sizing: border-box;
  padding-top: 12px;
  background: #4c4f53;
  border-radius: 3px;
  display: flex;
  flex-direction: column;
  align-items: center;
}
.vt-3d { margin-top: 5px; }
.vt-wire { margin-top: 5px; }
.vt-solid { margin-top: 3px; }
.vt-ref { margin-top: 4px; }
.vt-list { margin-top: 6px; }
.vt-caret {
  margin-top: 4px;
  border: 3px solid transparent;
  border-top: 4px solid #25272a;
  border-bottom: 0;
}
.vt-line {
  margin-top: 3px;
  width: 24px;
  border-top: 1px solid #888;
}

.draw {
  width: 311px;
  height: 514px;
  flex: none;
  background: #eee;
  border-bottom: 1px solid #c4c4c4;
}
.draw-tools {
  height: 29px;
  flex: none;
  box-sizing: border-box;
  background: #eee;
  display: flex;
  align-items: center;
  padding: 3px 0 0 6px;
}
.dt1 { width: 57px; }
.dt2 { width: 91px; }
.dt3 { width: 80px; gap: 5px; }
.draw-tools .caret {
  margin-left: 5px;
}
.more {
  margin-left: auto;
  margin-right: 1px;
  font-size: 7px;
  color: #666;
}
.draw-search {
  height: 24px;
  background: #fff;
  border: 1px solid #c9c9c9;
  margin: 1px 1px 0;
  color: #8a8a8a;
}
.draw-body {
  margin: 2px 1px 0 0;
  flex: 1;
  background: #fff;
  border: 1px solid #c9c9c9;
  display: flex;
  flex-direction: column;
  min-height: 0;
}
.draw-wrap {
  height: 411px;
  display: flex;
  overflow: hidden;
  flex: none;
}
.dt {
  width: 294px;
  flex: none;
}
.d-i { width: 22px; }
.d-n { width: 110px; }
.d-r { width: 51px; }
.d-f { width: 71px; }
.d-c { width: 40px; }
.dt th {
  height: 16px;
}
.dt td {
  height: 20px;
  border: 1px solid #d6d6d6;
  padding: 0;
  white-space: nowrap;
  overflow: hidden;
}
.dt td.ctr {
  text-align: center;
}
.dt td.code {
  padding-left: 3px;
}
.dt td.name {
  position: relative;
  overflow: visible;
}
.exp {
  display: inline-block;
  box-sizing: border-box;
  vertical-align: -2px;
  width: 12px;
  height: 12px;
  border: 1px solid #8a8a8a;
  border-radius: 2px;
  position: relative;
  background: #fff;
}
.exp::after {
  content: "";
  position: absolute;
  left: 2.5px;
  top: 4.5px;
  width: 5px;
  height: 1px;
  background: #444;
}
.lv0 {
  padding-left: 2px !important;
}
.lv0 span {
  margin-left: 6px;
}
.lv1 {
  padding-left: 12px !important;
}
.lv1 span {
  margin-left: 6px;
}
.lv1::before {
  content: "";
  position: absolute;
  left: 8px;
  top: 0;
  width: 4px;
  height: 11px;
  border-left: 1px solid #ddd;
  border-bottom: 1px solid #ddd;
}
.lv2,
.lv3 {
  padding-left: 41px !important;
}
.lv2::before,
.lv3::before {
  content: "";
  position: absolute;
  left: 18px;
  top: 0;
  width: 16px;
  height: 10px;
  border-left: 1px solid #ddd;
  border-bottom: 1px solid #ddd;
}
.lv2::after {
  content: "";
  position: absolute;
  left: 18px;
  top: 10px;
  bottom: 0;
  border-left: 1px solid #ddd;
}
.hit td {
  background: #008000;
  color: #2a3a2a;
  border-color: #dfe8df;
}
.hit td.idx {
  background: #eeeeee;
  color: #222;
  border-color: #d6d6d6;
}
.hit .lv2::before,
.hit .lv2::after {
  border-color: #fff;
}
.d-vscroll {
  width: 8px;
  height: 204px;
  margin: 11px 0 0 4px;
  background: #cbcbcb;
  border-radius: 4px;
  flex: none;
}
.d-hscroll {
  padding: 4px 0 0 10px;
}
.d-hscroll i {
  display: block;
  width: 207px;
  height: 8px;
  background: #cbcbcb;
  border-radius: 4px;
}

.dialog {
  position: absolute;
  left: 508px;
  top: 289px;
  width: 361px;
  height: 144px;
  box-sizing: border-box;
  background: #eee;
  border: 1px solid #c7ccd4;
  border-top: 0;
  display: flex;
  flex-direction: column;
}
.dlg-title {
  height: 27px;
  flex: none;
  margin: 0 -1px;
  background: #2f80e0;
  color: #fff;
  display: flex;
  align-items: center;
  justify-content: space-between;
  padding: 0 9px 0 8px;
}
.dlg-title b {
  font: 700 12px "DejaVu Sans", sans-serif;
}
.dlg-msg {
  height: 74px;
  flex: none;
  margin: 0 9px;
  padding-left: 15px;
  box-sizing: border-box;
  border-bottom: 1px solid #c8c8c8;
  display: flex;
  align-items: center;
  gap: 10px;
  font-size: 14px;
}
.info {
  width: 30px;
  height: 30px;
  border-radius: 50%;
  background: #2f80d8;
  color: #fff;
  font: italic bold 26px/30px "Liberation Serif", serif;
  text-align: center;
  margin-top: -2px;
}
.info i {
  font-style: italic;
}
.dlg-foot {
  display: flex;
  justify-content: flex-end;
  padding: 6px 11px 0 0;
}
.ok {
  width: 78px;
  height: 26px;
  border: 0;
  border-radius: 3px;
  background: #2f80e0;
  color: #fff;
  font: inherit;
}

/* 状态栏 */
.status {
  height: 30px;
  flex: none;
  display: flex;
  align-items: center;
  color: #444;
  white-space: nowrap;
}
.s-xy { width: 247px; padding-left: 3px; box-sizing: border-box; word-spacing: 2px; flex: none; }
.s-h { width: 79px; flex: none; }
.s-b { width: 103px; flex: none; }
.s-n { width: 103px; flex: none; }
.s-btn {
  box-sizing: border-box;
  height: 24px;
  background: #cfcfcf;
  border: 1px solid #9f9f9f;
  margin-right: 3px;
  display: flex;
  align-items: center;
  justify-content: center;
  gap: 3px;
  flex: none;
  color: #333;
}
.sb1 { width: 25px; }
.sb2 { width: 36px; background: #fff; border-color: #39a0f0; }
.sb3 { width: 36px; }
.sb4 { width: 24px; }
.sb5 { width: 36px; }
.sb6 { width: 72px; }
.sb7 { width: 62px; }
.s-cad {
  margin-left: 3px;
  width: 116px;
  letter-spacing: 0.3px;
  flex: none;
}
.zoom-btn {
  width: 12px;
  height: 12px;
  line-height: 10px;
  border-radius: 50%;
  box-sizing: border-box;
  border: 1px solid #8a8a8a;
  background: #f6f6f6;
  text-align: center;
  font-size: 10px;
  flex: none;
}
.slider {
  width: 46px;
  height: 2px;
  background: #fff;
  border-top: 1px solid #c4c4c4;
  margin: 0 6px 0 3px;
  flex: none;
  position: relative;
}
.slider i {
  position: absolute;
  right: 0;
  top: -9px;
  width: 9px;
  height: 18px;
  box-sizing: border-box;
  background: #f4f4f4;
  border: 1px solid #8a8a8a;
  border-radius: 2px;
}
.s-msg {
  margin-left: 4px;
  color: #333;
}

/* 任务栏 */
.taskbar {
  flex: 1;
  display: flex;
  background: linear-gradient(#0f4e84, #246ea8);
  border-top: 1px solid #123a5e;
}
.orb {
  width: 30px;
  margin-left: 13px;
  margin-right: 29px;
  background: #8fc8f0;
  border-radius: 15px 15px 0 0;
}
.task {
  width: 60px;
  flex: none;
  background: linear-gradient(#8cc3ea, #4e98d2);
  border-left: 1px solid #dceaf5;
  border-right: 1px solid #1c4f7a;
  box-sizing: border-box;
}
.show-desk {
  margin-left: auto;
  width: 14px;
  background: #7e97ad;
  border-left: 1px solid #c8d6e2;
}
</style>
